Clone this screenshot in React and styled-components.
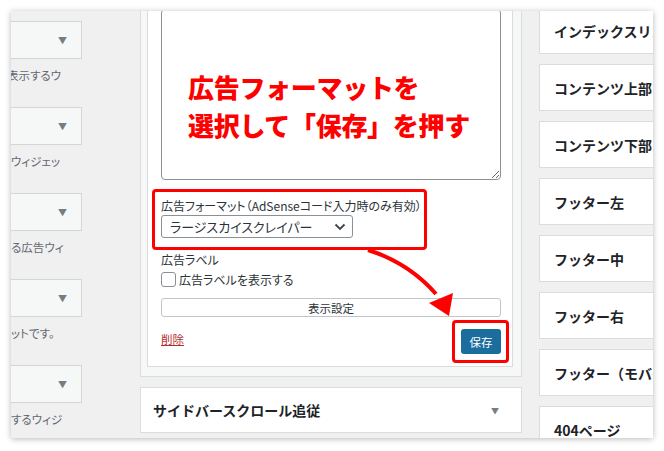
import React from 'react';
import styled, { createGlobalStyle } from 'styled-components';

const GlobalStyle = createGlobalStyle`
	body {
		margin: 0;
		background: #fff;
		font-family: 'Noto Sans CJK JP', 'Noto Sans', sans-serif;
		color: #3c434a;
	}
`;

const Page = styled.div`
	width: 664px;
	height: 451px;
	padding: 11px 0 0 11px;
	box-sizing: border-box;
`;

const Frame = styled.div`
	position: relative;
	width: 642px;
	height: 427px;
	overflow: hidden;
	background: #f0f0f1;
	box-shadow: 0 1px 6px rgba(0, 0, 0, 0.28);
	display: flex;
	align-items: flex-start;
`;

const LeftCol = styled.div`
	width: 129px;
	flex: none;
	overflow: hidden;
	padding-top: 10px;
	display: flex;
	flex-direction: column;
`;

const SideSelect = styled.div`
	width: 131px;
	height: 38px;
	margin-left: -60px;
	box-sizing: border-box;
	background: #f6f7f7;
	border: 1px solid #d4d5d7;
	display: flex;
	align-items: center;
	justify-content: flex-end;
	padding-right: 14px;
	color: #787c82;
	font-size: 9px;
`;

const SideText = styled.div`
	height: 16px;
	line-height: 16px;
	margin: 8px 0 24px ${(p) => p.$shift || 0}px;
	font-size: 11.5px;
	color: #646970;
	white-space: nowrap;
	font-feature-settings: 'palt';
`;

const MidCol = styled.div`
	width: 382px;
	flex: none;
	display: flex;
	flex-direction: column;
`;

const Holder = styled.div`
	margin-top: -2px;
	background: #f6f7f7;
	border: 1px solid #dcdcde;
	padding: 0 8px 9px 6px;
`;

const Widget = styled.div`
	margin-top: -2px;
	background: #fff;
	border: 1px solid #dcdcde;
	padding: 0 11px 12px 13px;
	display: flex;
	flex-direction: column;
	font-size: 12px;
	color: #2c3338;
	font-feature-settings: 'palt';
`;

const Area = styled.textarea`
	display: block;
	width: 100%;
	height: 171px;
	box-sizing: border-box;
	border: 1px solid #8c8f94;
	border-radius: 4px;
	background: #fff;
	resize: vertical;
	margin: 0;
`;

const Label = styled.div`
	line-height: 18px;
	margin-top: ${(p) => p.$top || 0}px;
	font-size: 12px;
	white-space: nowrap;
`;

const FormatSelect = styled.div`
	width: 192px;
	height: 23px;
	box-sizing: border-box;
	border: 1px solid #8c8f94;
	border-radius: 3px;
	display: flex;
	align-items: center;
	justify-content: space-between;
	padding: 0 6px 0 8px;
	font-size: 13px;
	color: #2c3338;
	white-space: nowrap;
`;

const CheckRow = styled.label`
	display: flex;
	align-items: center;
	gap: 3px;
	height: 18px;
	margin-top: 1px;
	font-size: 12px;
`;

const Check = styled.span`
	width: 13px;
	height: 13px;
	border: 1px solid #8c8f94;
	border-radius: 3px;
	background: #fff;
`;

const WideButton = styled.div`
	margin-top: 10px;
	height: 19px;
	box-sizing: border-box;
	border: 1px solid #c3c4c7;
	border-radius: 3px;
	display: flex;
	align-items: center;
	justify-content: center;
	font-size: 11.5px;
	color: #2c3338;
`;

const Footer = styled.div`
	margin-top: 12px;
	display: flex;
	justify-content: space-between;
	align-items: flex-start;
`;

const DeleteLink = styled.a`
	margin-top: 1px;
	line-height: 18px;
	font-size: 11.5px;
	color: #b32d2e;
	text-decoration: underline;
`;

const SaveButton = styled.div`
	width: 40px;
	height: 25px;
	border-radius: 3px;
	background: #1b6d9e;
	color: #fff;
	font-size: 11.5px;
	display: flex;
	align-items: center;
	justify-content: center;
`;

const Collapsed = styled.div`
	margin-top: 10px;
	height: 46px;
	box-sizing: border-box;
	background: #fff;
	border: 1px solid #dcdcde;
	display: flex;
	align-items: center;
	justify-content: space-between;
	padding: 0 22px 0 12px;
	font-size: 14px;
	font-weight: 700;
	color: #1d2327;
`;

const Caret = styled.span`
	font-size: 8px;
	color: #787c82;
	font-weight: 400;
`;

const RightCol = styled.div`
	width: 131px;
	flex: none;
	margin-left: 17px;
	margin-top: -4px;
	display: flex;
	flex-direction: column;
	gap: 10px;
`;

const AreaBox = styled.div`
	height: 47px;
	box-sizing: border-box;
	background: #fff;
	border: 1px solid #dcdcde;
	display: flex;
	align-items: center;
	padding-left: 14px;
	font-size: 14px;
	font-weight: 700;
	color: #1d2327;
	white-space: nowrap;
	overflow: hidden;
`;

const Note = styled.div`
	position: absolute;
	left: 177px;
	top: 57px;
	font-size: 26px;
	line-height: 38px;
	letter-spacing: -0.3px;
	font-weight: 900;
	color: #ff0000;
	white-space: nowrap;
`;

const Mark = styled.div`
	position: absolute;
	left: ${(p) => p.$x}px;
	top: ${(p) => p.$y}px;
	width: ${(p) => p.$w}px;
	height: ${(p) => p.$h}px;
	box-sizing: border-box;
	border: 3px solid #ff0000;
	border-radius: 4px;
`;

const Arrow = styled.svg`
	position: absolute;
	left: 0;
	top: 0;
	pointer-events: none;
`;

const sideItems = [
	{ text: '表示するウ', shift: -4 },
	{ text: 'ウィジェッ', shift: 0 },
	{ text: 'る広告ウィ', shift: 0 },
	{ text: 'ットです。', shift: 0 },
	{ text: 'するウィジ', shift: 0 },
];

const areas = [
	'インデックスリスト',
	'コンテンツ上部',
	'コンテンツ下部',
	'フッター左',
	'フッター中',
	'フッター右',
	'フッター（モバイル）',
	'404ページ',
];

const Chevron = () => (
	<svg width='12' height='8' viewBox='0 0 12 8'>
		<path d='M1.5 1.5 L6 6 L10.5 1.5' fill='none' stroke='#3c434a' strokeWidth='1.8' />
	</svg>
);

const App = () => {
	return (
		<Page>
			<GlobalStyle />
			<Frame>
				<LeftCol>
					{sideItems.map((item, i) => (
						<React.Fragment key={i}>
							<SideSelect>▼</SideSelect>
							<SideText $shift={item.shift}>{item.text}</SideText>
						</React.Fragment>
					))}
				</LeftCol>
				<MidCol>
					<Holder>
						<Widget>
							<Area readOnly />
							<Label $top={17}>広告フォーマット（AdSenseコード入力時のみ有効）</Label>
							<FormatSelect>
								<span>ラージスカイスクレイパー</span>
								<Chevron />
							</FormatSelect>
							<Label $top={13}>広告ラベル</Label>
							<CheckRow>
								<Check />
								広告ラベルを表示する
							</CheckRow>
							<WideButton>表示設定</WideButton>
							<Footer>
								<DeleteLink>削除</DeleteLink>
								<SaveButton>保存</SaveButton>
							</Footer>
						</Widget>
					</Holder>
					<Collapsed>
						サイドバースクロール追従
						<Caret>▼</Caret>
					</Collapsed>
				</MidCol>
				<RightCol>
					{areas.map((a) => (
						<AreaBox key={a}>{a}</AreaBox>
					))}
				</RightCol>

				<Note>
					広告フォーマットを
					<br />
					選択して「保存」を押す
				</Note>
				<Mark $x={141} $y={178} $w={275} $h={61} />
				<Mark $x={441} $y={309} $w={57} $h={43} />
				<Arrow width='642' height='427' viewBox='0 0 642 427'>
					<path d='M357 239 Q398 252 425 283' fill='none' stroke='#ff0000' strokeWidth='4' />
					<polygon points='418,292 442,282 438,305' fill='#ff0000' />
				</Arrow>
			</Frame>
		</Page>
	);
};

export default App;
